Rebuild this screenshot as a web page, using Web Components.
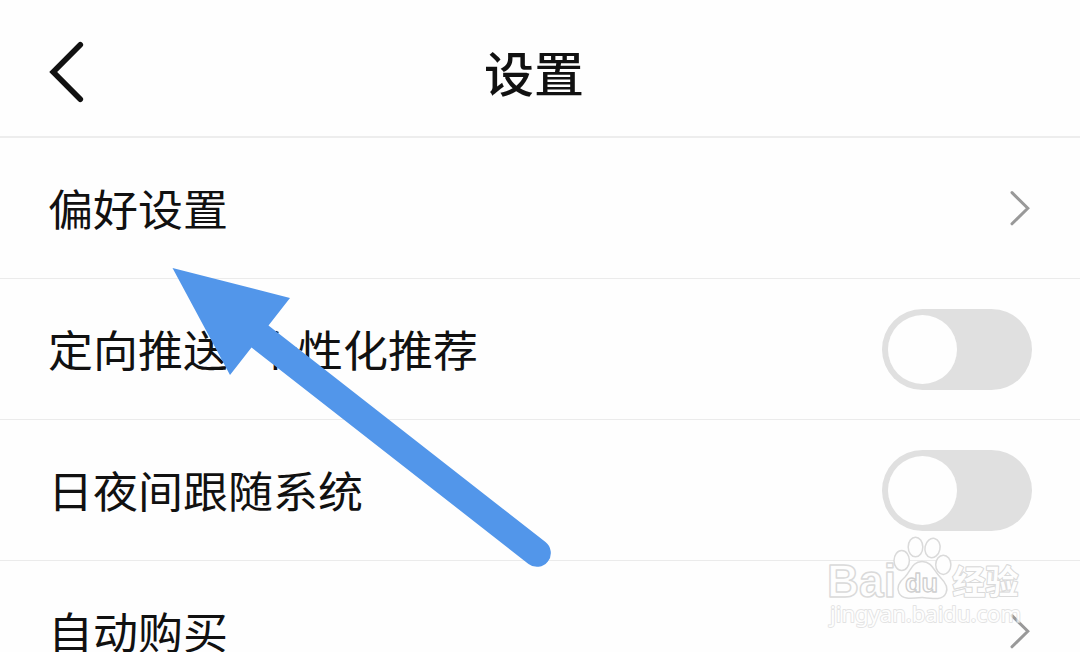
<!DOCTYPE html>
<html lang="zh-CN">

<head>
  <meta charset="UTF-8">
  <meta name="viewport" content="width=device-width, initial-scale=1.0">
  <title>设置</title>
  <style>
    body {
      margin: 0;
      height: 652px;
      overflow: hidden;
      background: #fefefe;
      color: #111;
      font-family: "Noto Sans CJK SC", sans-serif;
    }

    .dash {
      display: inline-block;
      width: 25px;
    }
  </style>
</head>

<body>
  <template id="pageTemplate">
    <style>
      :host {
        display: flex;
        flex-direction: column;
        position: relative;
        height: 652px;
        overflow: hidden;
      }
    </style>
    <slot></slot>
  </template>

  <template id="headerTemplate">
    <style>
      :host {
        display: grid;
        grid-template-columns: 100px 1fr 112px;
        align-items: center;
        flex: none;
        height: 136px;
        border-bottom: 2px solid #ededed;
      }

      svg {
        display: block;
        margin: 8px 0 0 48px;
      }

      h1 {
        margin: 6px 0 0;
        font-size: 50px;
        font-weight: 500;
        line-height: 72px;
        text-align: center;
        transform: scaleY(.95);
      }
    </style>
    <svg width="38" height="64" viewBox="0 0 38 64" fill="none" stroke="#111" stroke-width="5.6" stroke-linecap="round">
      <path d="M32.3 4.7 5.2 32 32.3 59.3" />
    </svg>
    <h1><slot></slot></h1>
  </template>

  <template id="rowTemplate">
    <style>
      :host {
        display: flex;
        align-items: center;
        justify-content: space-between;
        flex: none;
        box-sizing: border-box;
        height: 141px;
        padding: 0 48px;
        border-bottom: 1px solid #ebebeb;
      }

      .label {
        font-size: 45px;
        line-height: 64px;
        white-space: nowrap;
        transform: scaleY(.95);
      }
    </style>
    <span class="label"><slot></slot></span>
    <slot name="action"></slot>
  </template>

  <template id="chevronTemplate">
    <style>
      :host {
        display: block;
      }

      svg {
        display: block;
      }
    </style>
    <svg width="24" height="38" viewBox="0 0 24 38" fill="none" stroke="#999" stroke-width="3" stroke-linecap="round">
      <path d="M4 3.6 19.8 19.2 4 34.8" />
    </svg>
  </template>

  <template id="switchTemplate">
    <style>
      :host {
        display: block;
        box-sizing: border-box;
        width: 150px;
        height: 81px;
        padding: 6px;
        border-radius: 41px;
        background: #e0e0e0;
      }

      .knob {
        width: 69px;
        height: 69px;
        border-radius: 50%;
        background: #fefefe;
      }
    </style>
    <div class="knob"></div>
  </template>

  <template id="arrowTemplate">
    <style>
      :host {
        display: block;
        position: absolute;
        left: 172px;
        top: 268px;
      }

      svg {
        display: block;
      }
    </style>
    <svg width="380" height="300" viewBox="172 268 380 300" fill="#5296ea">
      <path d="M172.5 268 290 298 268.5 325.5 545.5 542.1A13.8 13.8 0 0 1 528.5 563.9L251.5 347.5 230 375Z" />
    </svg>
  </template>

  <template id="watermarkTemplate">
    <style>
      :host {
        display: block;
        position: absolute;
        left: 820px;
        top: 530px;
      }

      svg {
        display: block;
      }

      svg * {
        stroke-linejoin: round;
      }

      .paw {
        stroke-width: 1.5;
      }

      .latin {
        font-family: "Liberation Sans", sans-serif;
        font-weight: 700;
      }

      .cjk {
        font-family: "Noto Sans CJK SC", sans-serif;
        font-weight: 700;
        paint-order: stroke;
      }

      .url {
        font-family: "Noto Sans", sans-serif;
        font-weight: 400;
        opacity: .75;
        paint-order: stroke;
      }
    </style>
    <svg width="210" height="104" viewBox="820 530 210 104" fill="#fefefe" stroke="#dadada">
      <text class="latin" x="827" y="597" font-size="46" stroke-width="1.5" textLength="69" lengthAdjust="spacingAndGlyphs">Bai</text>
      <g class="paw">
        <ellipse cx="901.7" cy="560.5" rx="7.7" ry="10" />
        <ellipse cx="915.5" cy="547" rx="7.3" ry="9.8" />
        <ellipse cx="932.5" cy="548" rx="7.5" ry="9.7" transform="rotate(12 932.5 548)" />
        <ellipse cx="943.3" cy="564.8" rx="7.6" ry="9.6" />
        <path d="M922 561.5C932 561.5 934 571 940 577C946 583 948.5 588 946 593C943 600 935 599 922 597.5C909 599 902 599 899 593C896.500 588 899 582 905 577C911 571 912 561.500 922 561.500Z" />
      </g>
      <text class="latin" x="905" y="592" font-size="26.500" stroke="#cfcfcf" stroke-width="1.3" textLength="33" lengthAdjust="spacingAndGlyphs">du</text>
      <text class="cjk" x="952.5" y="594" font-size="33" stroke-width="2.2" textLength="66" lengthAdjust="spacingAndGlyphs">经验</text>
      <text class="url" x="830" y="622" font-size="22" stroke-width="1.8" textLength="191" lengthAdjust="spacingAndGlyphs">jingyan.baidu.com</text>
    </svg>
  </template>

  <settings-page>
    <settings-header>设置</settings-header>
    <settings-row>偏好设置<row-chevron slot="action"></row-chevron></settings-row>
    <settings-row>定向推送<span class="dash">-</span>个性化推荐<toggle-switch slot="action"></toggle-switch></settings-row>
    <settings-row>日夜间跟随系统<toggle-switch slot="action"></toggle-switch></settings-row>
    <settings-row>自动购买<row-chevron slot="action"></row-chevron></settings-row>
    <pointer-arrow></pointer-arrow>
    <site-watermark></site-watermark>
  </settings-page>

  <script type="module">
    const define = (name, templateId) => {
      window.customElements.define(name, class extends HTMLElement {
        constructor() {
          super();

          this.attachShadow({ mode: 'open' });
          const template = document.querySelector(templateId);
          this.shadowRoot.appendChild(document.importNode(template.content, true));
        }
      });
    };

    define('settings-page', '#pageTemplate');
    define('settings-header', '#headerTemplate');
    define('settings-row', '#rowTemplate');
    define('row-chevron', '#chevronTemplate');
    define('toggle-switch', '#switchTemplate');
    define('pointer-arrow', '#arrowTemplate');
    define('site-watermark', '#watermarkTemplate');
  </script>
</body>

</html>
